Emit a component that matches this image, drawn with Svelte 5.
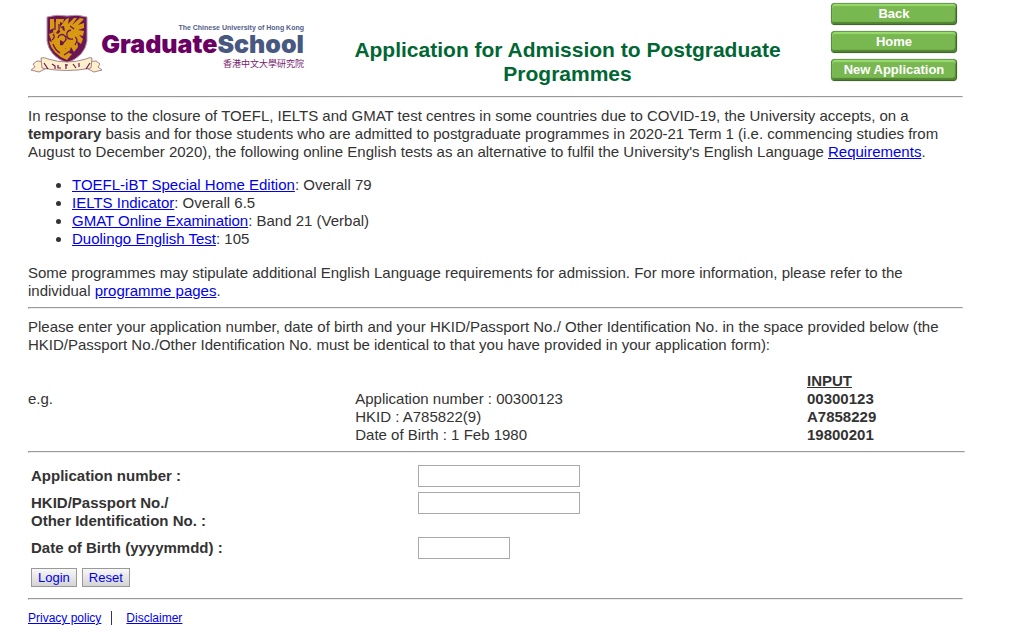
<svelte:head>
  <title>Application for Admission to Postgraduate Programmes</title>
</svelte:head>

<div class="page">
  <header>
    <a class="logo" href="#home" aria-label="CUHK Graduate School">
      <svg width="280" height="64" viewBox="28 12 280 64">
        <!-- shield -->
        <path d="M47 17q10 -3 20 -1q10 -2 20 1v24q-2 15 -20 22q-18 -7 -20 -22z" fill="#6b1555" stroke="#b79aa8" stroke-width="1" />
        <path d="M50 19l4 0l0 3l2 0l0 -3l8 0l-1 4l-3 -1l0 5l3 2l-2 3l-3 -2l-2 3l-3 -1l1 -4l-4 2z" fill="#d99a12" />
        <path d="M66 19l3 -1l-1 6l6 -6l3 0l-5 7l8 -7l4 1l-6 6l6 -2l0 5l-6 2l6 1l-1 5l-4 -1l4 4l-2 5l-4 -3l1 6l-4 5l-3 -5l-2 6l-4 -1l1 -4l-6 1l-2 -3l5 -1l2 -4l4 -3l-5 -3l-3 -5l4 1l-1 -5l-4 1l3 -4z" fill="#d99a12" />
        <path d="M49 34l5 -2l4 2l4 -4l4 2l-2 4l4 2l-4 4l-4 -2l0 5l5 3l4 5l3 1l-5 6q-15 -6 -18 -19l3 1z" fill="#d99a12" />
        <path d="M58 38a4 4 0 1 1 6 4M71 30q-5 1 -4 6q1 4 6 3M53 44q2 6 7 9M55 21v9M75 37q4 2 0 8M59 24v8M70 51l-6 4M53 34q3 3 -1 6M70 26l4 3" fill="none" stroke="#6b1555" stroke-width="1.300" />
        <!-- ribbon -->
        <path d="M37 61l11 1l-1 6l-8 4l-8 -2l4 -3l-2 -3z" fill="#fff0cc" stroke="#a68488" stroke-width="1" />
        <path d="M96 61l-11 1l1 6l8 4l8 -2l-4 -3l2 -3z" fill="#fff0cc" stroke="#a68488" stroke-width="1" />
        <path d="M41 58q4 -1 7 1q19 6 38 0q3 -2 6 -1l-1 10q-24 5 -49 0z" fill="#fff0cc" stroke="#a68488" stroke-width="1" />
        <path d="M44 63l4 6M90 63l-4 6M52 64l3 2v3M58 65v3h3M66 64v5M65 65h3M73 64l3 4M79 63v4" fill="none" stroke="#6b1555" stroke-width="1.200" />
        <!-- wordmark -->
        <text class="small" x="304" y="30" text-anchor="end">The Chinese University of Hong Kong</text>
        <text class="word" x="304" y="53" text-anchor="end"><tspan class="purple">Graduate</tspan><tspan class="slate">School</tspan></text>
        <text class="chinese" x="304" y="67" text-anchor="end">香港中文大學研究院</text>
      </svg>
    </a>
    <h1>Application for Admission to Postgraduate Programmes</h1>
    <nav>
      <button type="button">Back</button>
      <button type="button">Home</button>
      <button type="button">New Application</button>
    </nav>
  </header>

  <hr>

  <p>
    In response to the closure of TOEFL, IELTS and GMAT test centres in some countries due to COVID-19, the University accepts, on a<br>
    <b>temporary</b> basis and for those students who are admitted to postgraduate programmes in 2020-21 Term 1 (i.e. commencing studies from<br>
    August to December 2020), the following online English tests as an alternative to fulfil the University's English Language <a href="#requirements">Requirements</a>.
  </p>

  <ul>
    {#each tests as test}
      <li><a href={test.link}>{test.name}</a>: {test.score}</li>
    {/each}
  </ul>

  <p>
    Some programmes may stipulate additional English Language requirements for admission. For more information, please refer to the<br>
    individual <a href="#programmes">programme pages</a>.
  </p>

  <hr>

  <p>
    Please enter your application number, date of birth and your HKID/Passport No./ Other Identification No. in the space provided below (the<br>
    HKID/Passport No./Other Identification No. must be identical to that you have provided in your application form):
  </p>

  <table class="example">
    <thead>
      <tr><td></td><td></td><th><u>INPUT</u></th></tr>
    </thead>
    <tbody>
      {#each examples as example, i}
        <tr>
          <td>{i === 0 ? 'e.g.' : ''}</td>
          <td>{example.label} : {example.value}</td>
          <th>{example.input}</th>
        </tr>
      {/each}
    </tbody>
  </table>

  <hr class="wide">

  <form on:submit|preventDefault>
    <div class="row">
      <label for="appNo">Application number :</label>
      <input id="appNo" type="text">
    </div>
    <div class="row">
      <label for="idNo">HKID/Passport No./<br>Other Identification No. :</label>
      <input id="idNo" type="text">
    </div>
    <div class="row">
      <label for="dob">Date of Birth (yyyymmdd) :</label>
      <input id="dob" class="short" type="text" maxlength="8">
    </div>
    <div class="actions">
      <button type="submit">Login</button>
      <button type="reset">Reset</button>
    </div>
  </form>

  <hr>

  <footer>
    <a href="#privacy">Privacy policy</a>
    <span class="divider"></span>
    <a href="#disclaimer">Disclaimer</a>
  </footer>
</div>

<style>
  :global(body) {
    background: #fff;
  }

  .page {
    padding: 3px 69px 16px 28px;
    font-family: 'Liberation Sans', Arial, sans-serif;
    font-size: 15px;
    line-height: 18px;
    color: #333;
  }

  header {
    display: grid;
    grid-template-columns: 280px 1fr 136px;
    column-gap: 24px;
    min-height: 86px;
  }

  .logo {
    margin-top: 9px;
  }

  .logo svg {
    display: block;
  }

  .small {
    font-size: 7px;
    font-weight: bold;
    fill: #53608a;
  }

  .word {
    font-family: Inter, 'Liberation Sans', sans-serif;
    font-size: 25px;
    font-weight: 900;
  }

  .purple {
    fill: #6b0062;
  }

  .slate {
    fill: #475980;
  }

  .chinese {
    font-family: 'Noto Sans CJK TC', sans-serif;
    font-size: 9px;
    fill: #7a1a72;
  }

  h1 {
    margin: 35px 0 0;
    font-size: 21px;
    line-height: 24px;
    text-align: center;
    color: #063;
  }

  nav {
    display: flex;
    flex-direction: column;
    align-items: flex-end;
    gap: 6px;
    padding-right: 6px;
  }

  nav button {
    width: 126px;
    height: 22px;
    padding: 0;
    border: 1px solid;
    border-color: #6a9a4c #41682a #41682a #5a8a3c;
    border-radius: 4px;
    background: #79b751;
    box-shadow: inset 0 2px 1px #98dc6c, inset -1px -2px 1px #4f8430, 0 0 1px #777;
    font: bold 13px/18px 'Liberation Sans', Arial, sans-serif;
    color: #fff;
  }

  hr {
    margin: 7px 0 9px;
    border: 1px solid;
    border-color: #999 #eee #eee #999;
  }

  .wide {
    margin: 7px -2px 8px 0;
  }

  p {
    margin: 0;
    white-space: nowrap;
  }

  a {
    color: #00e;
  }

  ul {
    margin: 15px 0 16px;
    padding-left: 44px;
  }

  table {
    width: 100%;
    margin-top: 18px;
    border-collapse: collapse;
    table-layout: fixed;
  }

  td,
  th {
    padding: 0;
    height: 18px;
    text-align: left;
  }

  .example td:first-child {
    width: 35%;
  }

  .example th {
    width: 156px;
  }

  form {
    display: flex;
    flex-direction: column;
    gap: 5px;
    padding: 4px 3px;
  }

  .row {
    display: grid;
    grid-template-columns: 5fr 7fr;
    align-items: start;
  }

  label {
    padding: 2px 0;
    font-weight: bold;
  }

  input {
    box-sizing: border-box;
    width: 162px;
    height: 22px;
    padding: 1px;
    border: 1px solid #a9a9a9;
    font: inherit;
  }

  .short {
    width: 92px;
  }

  .actions {
    display: flex;
    gap: 5px;
    padding-top: 4px;
  }

  .actions button {
    height: 19px;
    padding: 0 6px;
    border: 1px solid #999;
    background: linear-gradient(#f8f8f8, #d4d4d4);
    font: 13px/17px 'Liberation Sans', Arial, sans-serif;
    color: #00e;
  }

  footer {
    display: flex;
    align-items: center;
    gap: 10px;
    font-size: 12px;
  }

  .divider {
    width: 1px;
    height: 14px;
    margin-right: 4px;
    background: #336;
  }
</style>

<script lang="ts">
  type Test = {
    name: string;
    score: string;
    link: string;
  };
  type Example = {
    label: string;
    value: string;
    input: string;
  };

  const tests: Test[] = [
    { name: 'TOEFL-iBT Special Home Edition', score: 'Overall 79', link: '#toefl' },
    { name: 'IELTS Indicator', score: 'Overall 6.5', link: '#ielts' },
    { name: 'GMAT Online Examination', score: 'Band 21 (Verbal)', link: '#gmat' },
    { name: 'Duolingo English Test', score: '105', link: '#duolingo' },
  ];

  const examples: Example[] = [
    { label: 'Application number', value: '00300123', input: '00300123' },
    { label: 'HKID', value: 'A785822(9)', input: 'A7858229' },
    { label: 'Date of Birth', value: '1 Feb 1980', input: '19800201' },
  ];
</script>
